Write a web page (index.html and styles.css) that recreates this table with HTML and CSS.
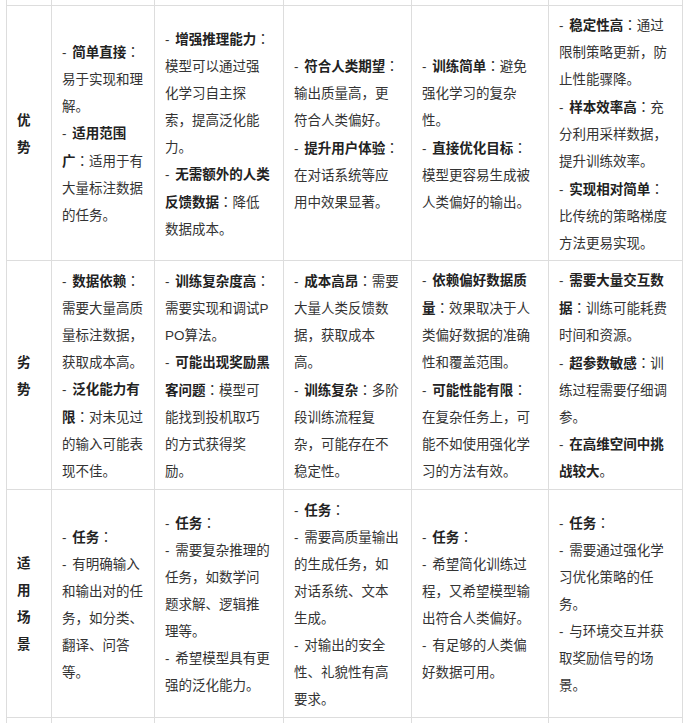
FILE: index.html
```html
<!DOCTYPE html>
<html lang="zh-CN">
<head>
<meta charset="utf-8">
<title>对比表</title>
<link rel="stylesheet" href="styles.css">
</head>
<body>
<div class="table">
  <div class="cell strip"></div><div class="cell strip"></div><div class="cell strip"></div><div class="cell strip"></div><div class="cell strip"></div><div class="cell strip"></div>

  <div class="cell label"><p>优势</p></div>
  <div class="cell">
    <p>- <b>简单直接</b><span class="c" lang="zh-TW">：</span>易于实现和理解。</p>
    <p>- <b>适用范围广</b><span class="c" lang="zh-TW">：</span>适用于有大量标注数据的任务。</p>
  </div>
  <div class="cell">
    <p>- <b>增强推理能力</b><span class="c" lang="zh-TW">：</span>模型可以通过强化学习自主探索，提高泛化能力。</p>
    <p>- <b>无需额外的人类反馈数据</b><span class="c" lang="zh-TW">：</span>降低数据成本。</p>
  </div>
  <div class="cell">
    <p>- <b>符合人类期望</b><span class="c" lang="zh-TW">：</span>输出质量高，更符合人类偏好。</p>
    <p>- <b>提升用户体验</b><span class="c" lang="zh-TW">：</span>在对话系统等应用中效果显著。</p>
  </div>
  <div class="cell">
    <p>- <b>训练简单</b><span class="c" lang="zh-TW">：</span>避免强化学习的复杂性。</p>
    <p>- <b>直接优化目标</b><span class="c" lang="zh-TW">：</span>模型更容易生成被人类偏好的输出。</p>
  </div>
  <div class="cell">
    <p>- <b>稳定性高</b><span class="c" lang="zh-TW">：</span>通过限制策略更新，防止性能骤降。</p>
    <p>- <b>样本效率高</b><span class="c" lang="zh-TW">：</span>充分利用采样数据，提升训练效率。</p>
    <p>- <b>实现相对简单</b><span class="c" lang="zh-TW">：</span>比传统的策略梯度方法更易实现。</p>
  </div>

  <div class="cell label"><p>劣势</p></div>
  <div class="cell">
    <p>- <b>数据依赖</b><span class="c" lang="zh-TW">：</span>需要大量高质量标注数据，获取成本高。</p>
    <p>- <b>泛化能力有限</b><span class="c" lang="zh-TW">：</span>对未见过的输入可能表现不佳。</p>
  </div>
  <div class="cell">
    <p>- <b>训练复杂度高</b><span class="c" lang="zh-TW">：</span>需要实现和调试PPO算法。</p>
    <p>- <b>可能出现奖励黑客问题</b><span class="c" lang="zh-TW">：</span>模型可能找到投机取巧的方式获得奖励。</p>
  </div>
  <div class="cell">
    <p>- <b>成本高昂</b><span class="c" lang="zh-TW">：</span>需要大量人类反馈数据，获取成本高。</p>
    <p>- <b>训练复杂</b><span class="c" lang="zh-TW">：</span>多阶段训练流程复杂，可能存在不稳定性。</p>
  </div>
  <div class="cell">
    <p>- <b>依赖偏好数据质量</b><span class="c" lang="zh-TW">：</span>效果取决于人类偏好数据的准确性和覆盖范围。</p>
    <p>- <b>可能性能有限</b><span class="c" lang="zh-TW">：</span>在复杂任务上，可能不如使用强化学习的方法有效。</p>
  </div>
  <div class="cell">
    <p>- <b>需要大量交互数据</b><span class="c" lang="zh-TW">：</span>训练可能耗费时间和资源。</p>
    <p>- <b>超参数敏感</b><span class="c" lang="zh-TW">：</span>训练过程需要仔细调参。</p>
    <p>- <b>在高维空间中挑战较大</b>。</p>
  </div>

  <div class="cell label"><p>适用场景</p></div>
  <div class="cell">
    <p>- <b>任务</b><span class="c" lang="zh-TW">：</span></p>
    <p>- 有明确输入和输出对的任务，如分类、翻译、问答等。</p>
  </div>
  <div class="cell">
    <p>- <b>任务</b><span class="c" lang="zh-TW">：</span></p>
    <p>- 需要复杂推理的任务，如数学问题求解、逻辑推理等。</p>
    <p>- 希望模型具有更强的泛化能力。</p>
  </div>
  <div class="cell">
    <p>- <b>任务</b><span class="c" lang="zh-TW">：</span></p>
    <p>- 需要高质量输出的生成任务，如对话系统、文本生成。</p>
    <p>- 对输出的安全性、礼貌性有高要求。</p>
  </div>
  <div class="cell">
    <p>- <b>任务</b><span class="c" lang="zh-TW">：</span></p>
    <p>- 希望简化训练过程，又希望模型输出符合人类偏好。</p>
    <p>- 有足够的人类偏好数据可用。</p>
  </div>
  <div class="cell">
    <p>- <b>任务</b><span class="c" lang="zh-TW">：</span></p>
    <p>- 需要通过强化学习优化策略的任务。</p>
    <p>- 与环境交互并获取奖励信号的场景。</p>
  </div>

  <div class="cell"></div><div class="cell"></div><div class="cell"></div><div class="cell"></div><div class="cell"></div><div class="cell"></div>
</div>
</body>
</html>
```

FILE: styles.css
```css
html, body {
  margin: 0;
  padding: 0;
  background: #ffffff;
}

body {
  font-family: "Liberation Sans", "Noto Sans CJK SC", sans-serif;
  font-size: 13.5px;
  line-height: 27px;
  color: #333333;
  overflow: hidden;
}

.table {
  display: grid;
  grid-template-columns: 44px 102px 128px 127px 136px 133px;
  grid-template-rows: 5px 254px 228px 227px 60px;
  gap: 1px;
  padding: 0 1px;
  margin-left: 6px;
  width: max-content;
  background: #dddddd;
}

.cell {
  background: #ffffff;
  display: flex;
  flex-direction: column;
  justify-content: center;
  padding: 6px 10px 5px 10px;
  word-break: break-all;
  word-spacing: 2px;
  text-spacing-trim: space-all;
  text-autospace: no-autospace;
  min-width: 0;
}

.cell:nth-child(6n+3),
.cell:nth-child(6n+4) {
  padding-right: 12px;
}

.strip {
  padding: 0;
}

.cell p {
  margin: 0;
}

.cell b {
  font-weight: 700;
  color: #222222;
}

.cell .c {
  font-family: "Noto Sans CJK TC", "Noto Sans CJK SC", sans-serif;
}

.label p {
  font-weight: 700;
  color: #222222;
}
```
